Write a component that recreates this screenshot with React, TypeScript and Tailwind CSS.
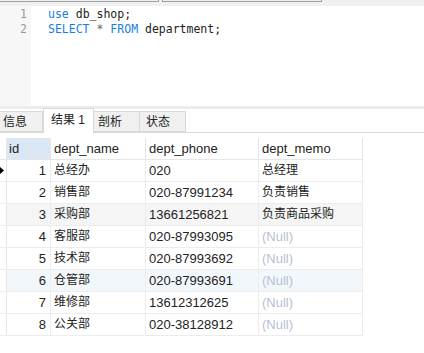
import React from 'react';

const rows = [
  { id: 1, name: '总经办', phone: '020', memo: '总经理' },
  { id: 2, name: '销售部', phone: '020-87991234', memo: '负责销售' },
  { id: 3, name: '采购部', phone: '13661256821', memo: '负责商品采购' },
  { id: 4, name: '客服部', phone: '020-87993095', memo: null },
  { id: 5, name: '技术部', phone: '020-87993692', memo: null },
  { id: 6, name: '仓管部', phone: '020-87993691', memo: null },
  { id: 7, name: '维修部', phone: '13612312625', memo: null },
  { id: 8, name: '公关部', phone: '020-38128912', memo: null },
];

const rowBg = (i: number) => (i === 2 ? 'bg-[#f5f5f5]' : i === 5 ? 'bg-[#f2f7fc]' : 'bg-white');

const tabs = ['信息', '结果 1', '剖析', '状态'];

export default function App() {
  return (
    <div className="w-[424px] h-[353px] bg-white overflow-hidden text-[#222] font-['Liberation_Sans','Noto_Sans_CJK_SC',sans-serif]">
      {/* toolbar remnant */}
      <div className="h-[6px] bg-[#f0f0f0] flex">
        <div className="w-[159px] h-[2px] border-b border-r border-[#a0a0a0]" />
        <div className="w-[160px] h-[2px] ml-[3px] border-b border-l border-r border-[#a0a0a0]" />
      </div>

      {/* editor */}
      <div className="h-[100px] flex font-['DejaVu_Sans_Mono',monospace] text-[11.5px] leading-[15px]">
        <div className="w-[31px] bg-[#f7f7f7] pt-[1px] pr-[4px] text-right text-[#999]">
          <div>1</div>
          <div>2</div>
        </div>
        <div className="pl-[17px] pt-[1px] whitespace-pre">
          <div>
            <span className="text-[#1a7de6]">use</span> db_shop;
          </div>
          <div>
            <span className="text-[#1a7de6]">SELECT</span> <span className="text-[#666]">*</span>{' '}
            <span className="text-[#1a7de6]">FROM</span> department;
          </div>
        </div>
      </div>

      {/* splitter */}
      <div className="h-[3px] bg-[#ececec]" />

      {/* tabs */}
      <div className="h-[24px] flex items-end border-b border-[#d9d9d9] text-[12px]">
        {tabs.map((t, i) =>
          i === 1 ? (
            <div
              key={t}
              className="w-[51px] h-[25px] -mb-px bg-white border border-b-0 border-[#d9d9d9] pl-[7px] leading-[22px] whitespace-pre"
            >
              {'结果 1'}
            </div>
          ) : (
            <div
              key={t}
              className={`h-[21px] bg-[#f0f0f0] border border-l-0 border-[#d9d9d9] leading-[20px] ${
                i === 0 ? 'w-[43px] pl-[3px]' : i === 2 ? 'w-[46px] pl-[4px]' : 'w-[46px] pl-[6px]'
              }`}
            >
              {t}
            </div>
          )
        )}
      </div>

      {/* grid */}
      <div className="mt-[5px] w-[363px] text-[13px]">
        <div className="flex h-[22px] leading-[21px] border-b border-[#e6e6e6]">
          <div className="w-[7px] border-r border-[#e6e6e6]" />
          <div className="w-[44px] bg-[#dae8f5] pl-[2px] border-r border-[#e6e6e6]">id</div>
          <div className="w-[95px] pl-[3px] border-r border-[#e6e6e6]">dept_name</div>
          <div className="w-[113px] pl-[3px] border-r border-[#e6e6e6]">dept_phone</div>
          <div className="w-[104px] pl-[3px] border-r border-[#e6e6e6]">dept_memo</div>
        </div>
        {rows.map((r, i) => (
          <div key={r.id} className={`flex h-[22px] leading-[21px] border-b border-[#ececec] ${rowBg(i)}`}>
            <div className="w-[7px] border-r border-[#e6e6e6] bg-white flex items-center">
              {i === 0 && (
                <svg width="6" height="9" viewBox="0 0 6 9" className="-ml-[1px]">
                  <path d="M0 0 L5 4.5 L0 9 Z" fill="#000" />
                </svg>
              )}
            </div>
            <div className="w-[44px] text-right pr-[4px] border-r border-[#ececec]">{r.id}</div>
            <div className="w-[95px] pl-[3px] text-[12px] border-r border-[#ececec]">{r.name}</div>
            <div className="w-[113px] pl-[3px] border-r border-[#ececec]">{r.phone}</div>
            <div
              className={`w-[104px] pl-[3px] border-r border-[#ececec] ${
                r.memo ? 'text-[12px]' : 'text-[#b8c0d2]'
              }`}
            >
              {r.memo ?? '(Null)'}
            </div>
          </div>
        ))}
      </div>
    </div>
  );
}
